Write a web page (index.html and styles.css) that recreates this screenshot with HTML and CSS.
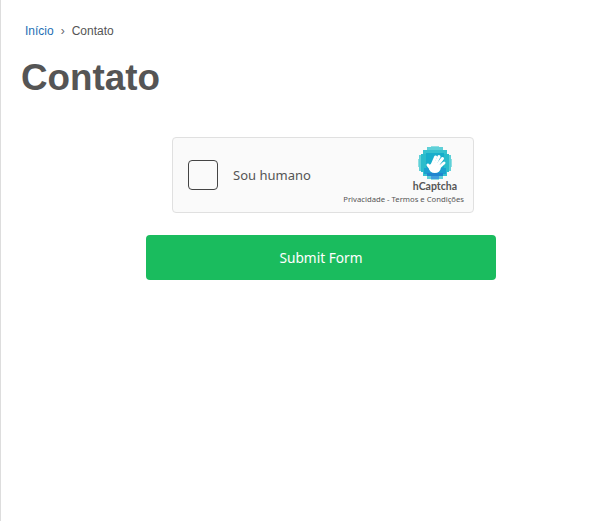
FILE: index.html
```html
<!DOCTYPE html>
<html lang="pt">
<head>
    <meta charset="UTF-8">
    <meta name="viewport" content="width=device-width, initial-scale=1.0">
    <title>Contato</title>
    <link rel="stylesheet" href="styles.css">
</head>
<body>
    <div class="page">
        <!-- Breadcrumb -->
        <nav class="breadcrumb">
            <a href="#">Início</a>
            <span class="sep">›</span>
            <span>Contato</span>
        </nav>

        <h1>Contato</h1>

        <!-- Form -->
        <form class="contact-form">
            <div class="captcha">
                <div class="captcha-check">
                    <div class="checkbox"></div>
                    <span class="captcha-label">Sou humano</span>
                </div>
                <div class="captcha-brand">
                    <svg class="captcha-logo" width="34" height="34" viewBox="0 0 34 34">
                        <g shape-rendering="crispEdges">
                            <rect x="13" y="0" width="8" height="34" fill="#8fdfe2"/>
                            <rect x="0" y="13" width="34" height="8" fill="#8fdfe2"/>
                            <rect x="9" y="1" width="16" height="32" fill="#5fd0d8"/>
                            <rect x="1" y="9" width="32" height="16" fill="#5fd0d8"/>
                            <rect x="5" y="4" width="24" height="26" fill="#36c2cf"/>
                            <rect x="3" y="8" width="28" height="18" fill="#2bbccb"/>
                            <rect x="8" y="7" width="18" height="20" fill="#18aecb"/>
                            <rect x="6" y="22" width="22" height="6" fill="#1b9fd0"/>
                            <rect x="9" y="27" width="16" height="3" fill="#1f86cf"/>
                            <rect x="13" y="30" width="8" height="3" fill="#3f9ede"/>
                        </g>
                        <g fill="none" stroke="#fff" stroke-width="3" stroke-linecap="round">
                            <path d="M14.500 18L17.500 11"/>
                            <path d="M17 18.500L21 10.500"/>
                            <path d="M19.500 19L24.500 12.500"/>
                            <path d="M21 21.500L26 17"/>
                            <path d="M14 24L10 19"/>
                        </g>
                        <ellipse cx="16.800" cy="21.800" rx="6" ry="5.200" fill="#fff"/>
                    </svg>
                    <span class="captcha-name">hCaptcha</span>
                    <span class="captcha-links">Privacidade - Termos e Condições</span>
                </div>
            </div>
            <button type="button" class="submit-button">Submit Form</button>
        </form>
    </div>
</body>
</html>
```

FILE: styles.css
```css
html, body {
    height: 100%;
}
body {
    margin: 0;
    font-family: "Liberation Sans", Arial, sans-serif;
    background-color: #fff;
}
.page {
    box-sizing: border-box;
    min-height: 100%;
    padding: 24px 0 0 20px;
    border-left: 1px solid #ddd;
}
.breadcrumb {
    display: flex;
    align-items: center;
    padding-left: 4px;
    font-size: 12px;
    line-height: 15px;
    color: #555;
}
.breadcrumb a {
    color: #1e6fb5;
    text-decoration: none;
}
.sep {
    margin: 0 7px;
    color: #666;
}
h1 {
    margin: 14px 0 0;
    font-size: 36.8px;
    line-height: 50px;
    font-weight: bold;
    color: #555;
}
.contact-form {
    display: flex;
    flex-direction: column;
    align-items: center;
    width: 350px;
    margin: 34px 0 0 125px;
}
.captcha {
    box-sizing: border-box;
    display: flex;
    justify-content: space-between;
    width: 302px;
    height: 76px;
    margin-left: 4px;
    background-color: #fafafa;
    border: 1px solid #e0e0e0;
    border-radius: 4px;
}
.captcha-check {
    display: flex;
    align-items: center;
    padding-left: 15px;
}
.checkbox {
    box-sizing: border-box;
    width: 30px;
    height: 30px;
    background-color: #fafafa;
    border: 1px solid #444;
    border-radius: 4px;
}
.captcha-label {
    margin-left: 15px;
    font-family: "Noto Sans", sans-serif;
    font-size: 13px;
    color: #555;
}
.captcha-brand {
    display: flex;
    flex-direction: column;
    align-items: flex-end;
    padding: 8px 9px 0 0;
}
.captcha-logo {
    margin-right: 12px;
}
.captcha-name {
    margin: 0 7px 0 0;
    font-family: Lato, sans-serif;
    font-size: 10.5px;
    line-height: 12px;
    font-weight: bold;
    color: #555;
}
.captcha-links {
    margin-top: 2px;
    font-family: "Noto Sans", sans-serif;
    font-size: 7.7px;
    line-height: 10px;
    white-space: nowrap;
    color: #555;
}
.submit-button {
    width: 350px;
    height: 45px;
    margin-top: 22px;
    background-color: #1abc5e;
    color: #fff;
    border: none;
    border-radius: 4px;
    font-family: "Noto Sans", sans-serif;
    font-size: 13.7px;
    cursor: pointer;
}
```
